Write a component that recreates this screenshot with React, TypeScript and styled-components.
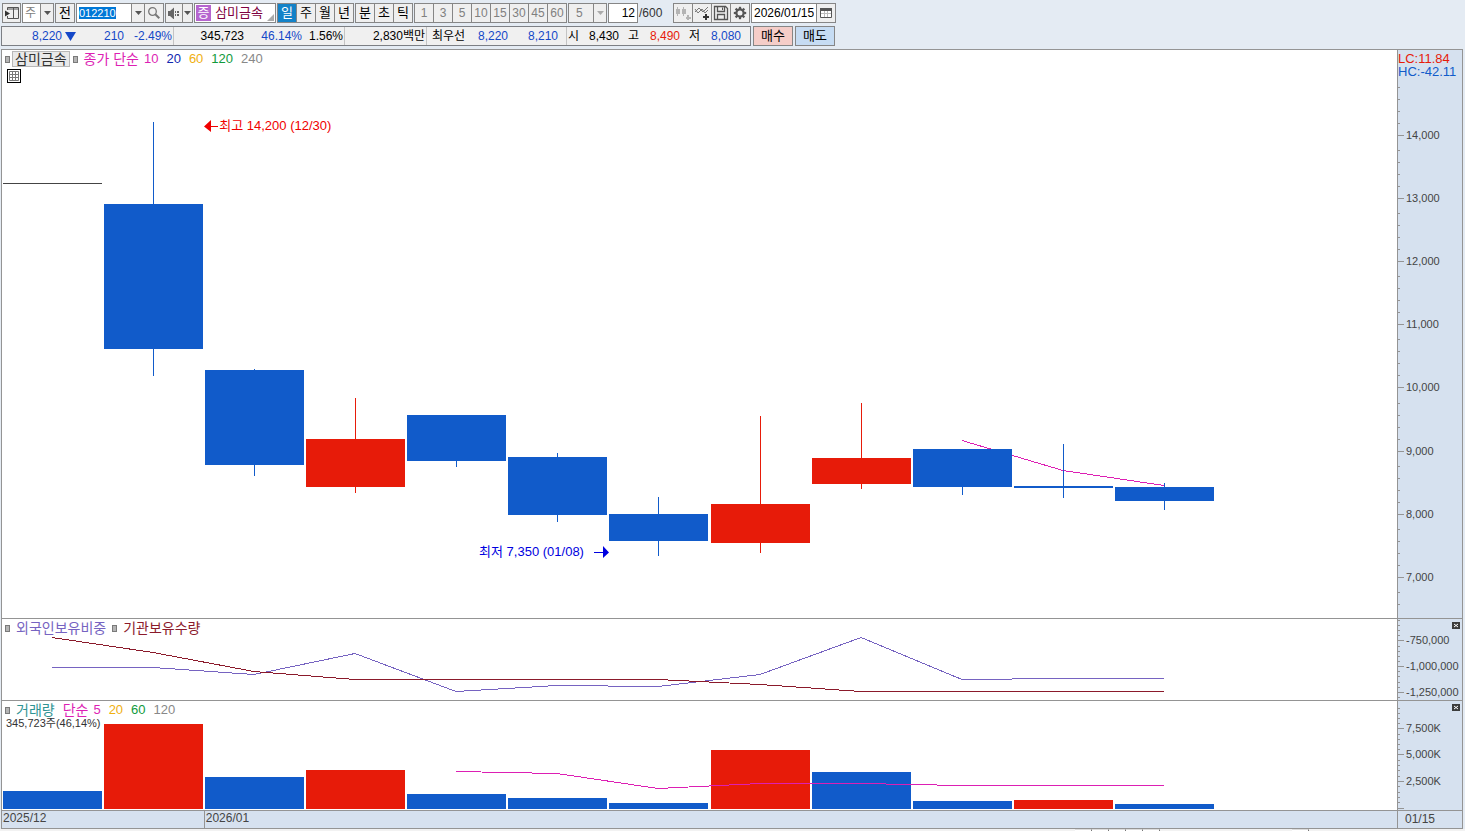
import React, { useEffect, useRef } from 'react';
import styled, { createGlobalStyle } from 'styled-components';

const color = {
  bar: '#e4ebf3',
  line: '#949494',
  edge: '#868686',
  axis: '#d6e1ef',
  up: '#e71b09',
  down: '#115bca',
  quoteBlue: '#1448c8',
  magenta: '#dd1fb4',
  violet: '#7663c1',
  maroon: '#8b1a2b',
  axisText: '#444444',
};

const GlobalStyle = createGlobalStyle`
  *, *::before, *::after { box-sizing: border-box; }
  body {
    margin: 0;
    background: #f2f2f2;
    color: #000;
    font-family: "Liberation Sans", "Noto Sans CJK KR", sans-serif;
    font-size: 12px;
    line-height: 16px;
  }
  button, input, select { font: inherit; color: inherit; margin: 0; border-radius: 0; }
`;

const Page = styled.div`
  background: ${color.bar};
`;

const Header = styled.header`
  display: flex;
  flex-direction: column;
  gap: 3px;
  padding: 3px 0 3px 1px;
`;

const Toolbar = styled.div`
  display: flex;
  align-items: center;
  gap: 1px;
  height: 20px;
  padding-left: 1px;
`;

const Group = styled.div`
  display: flex;
  height: 20px;
  & > * + * { margin-left: -1px; }
`;

const ToolButton = styled.button<{ $w?: number; $active?: boolean; $muted?: boolean }>`
  display: flex;
  align-items: center;
  justify-content: center;
  width: ${p => p.$w ?? 20}px;
  height: 20px;
  padding: 0;
  border: 1px solid ${color.edge};
  background: ${p => (p.$active ? '#1382c8' : '#efefef')};
  color: ${p => (p.$active ? '#fff' : p.$muted ? '#808080' : '#000')};
  line-height: 18px;
`;

const Period = styled(ToolButton)`
  font-size: 13px;
`;

const Picker = styled.label<{ $w: number }>`
  position: relative;
  display: flex;
  width: ${p => p.$w}px;
  height: 20px;
`;

const Select = styled.select<{ $white?: boolean }>`
  appearance: none;
  width: 100%;
  height: 20px;
  padding: 0 13px 0 ${p => (p.$white ? 2 : 7)}px;
  border: 1px solid ${color.edge};
  background: ${p => (p.$white ? '#fff' : '#efefef')};
  color: #808080;
  opacity: 1;
  line-height: 18px;
`;

const PickerArrow = styled.span`
  position: absolute;
  top: 1px;
  right: 1px;
  bottom: 1px;
  display: flex;
  align-items: center;
  justify-content: center;
  width: 13px;
  border-left: 1px solid ${color.edge};
  background: #efefef;
  pointer-events: none;
`;

const Field = styled.input<{ $w: number; $align?: string }>`
  width: ${p => p.$w}px;
  height: 20px;
  padding: 0 2px;
  border: 1px solid ${color.edge};
  background: #fff;
  text-align: ${p => p.$align ?? 'left'};
  outline: none;
  &::selection { background: #0078d7; color: #fff; }
`;

const CodeField = styled(Field)`
  font-size: 11px;
`;

const StockName = styled.button`
  display: flex;
  align-items: center;
  gap: 4px;
  width: 82px;
  height: 20px;
  padding: 0 0 0 1px;
  border: 1px solid ${color.edge};
  background: #fff;
  color: #800040;
  font-size: 13px;
  line-height: 16px;
  white-space: nowrap;
`;

const MarketTag = styled.span`
  width: 16px;
  height: 16px;
  background: #b565cf;
  color: #fff;
  text-align: center;
`;

const Corner = styled.svg`
  align-self: flex-end;
  flex: none;
`;

const Total = styled.span`
  width: 33px;
  color: #333;
`;

const Quotes = styled.div`
  display: flex;
  align-items: center;
  gap: 2px;
  height: 20px;
`;

const QuoteBox = styled.div`
  display: flex;
  height: 20px;
  border: 1px solid #7c7f84;
  background: #f0f0f0;
  line-height: 18px;
  white-space: nowrap;
`;

const Cell = styled.div<{ $end?: number }>`
  display: flex;
  padding-right: ${p => p.$end ?? 1}px;
  border-right: 1px solid #c4c4c4;
  &:last-child { border-right: 0; }
`;

const Quote = styled.span<{ $w: number; $c?: string }>`
  display: flex;
  align-items: center;
  justify-content: flex-end;
  width: ${p => p.$w}px;
  color: ${p => p.$c ?? '#000'};
`;

const TradeButton = styled.button<{ $bg: string }>`
  width: 40px;
  height: 20px;
  padding: 0;
  border: 1px solid ${color.edge};
  background: ${p => p.$bg};
  font-size: 13px;
  line-height: 16px;
`;

const Frame = styled.main`
  margin: 0 2px 0 1px;
  border: 1px solid ${color.line};
  background: #fff;
`;

const Pane = styled.section<{ $h: number }>`
  display: grid;
  grid-template-columns: minmax(0, 1fr) 65px;
  height: ${p => p.$h}px;
  border-bottom: 1px solid ${color.line};
  &:last-child { border-bottom: 0; }
`;

const Plot = styled.div`
  position: relative;
  & > svg { display: block; width: 100%; height: 100%; }
`;

const Axis = styled.div`
  position: relative;
  border-left: 1px solid ${color.line};
  background: ${color.axis};
  & > svg { display: block; }
`;

const AxisText = styled.text`
  font-size: 11px;
  fill: ${color.axisText};
`;

const Overlay = styled.div`
  position: absolute;
  top: 1px;
  left: 3px;
`;

const Legend = styled.div`
  display: flex;
  align-items: center;
  height: 16px;
  font-size: 13px;
  line-height: 16px;
  white-space: nowrap;
`;

const Marker = styled.span<{ $before?: number }>`
  width: 5px;
  height: 7px;
  margin-left: ${p => p.$before ?? 0}px;
  border: 1px solid #7a7a7a;
  background: #b4b4b4;
`;

const LegendItem = styled.span<{ $c: string; $gap?: number }>`
  margin-left: ${p => p.$gap ?? 8}px;
  color: ${p => p.$c};
`;

const LegendName = styled(LegendItem)`
  font-size: 14px;
`;

const NameButton = styled.button`
  height: 16px;
  margin: 0 3px 0 2px;
  padding: 0 2px;
  border: 1px solid #b8b8b8;
  background: #e9e9e9;
  color: #333;
  font-size: 14px;
  line-height: 14px;
`;

const TableButton = styled.button`
  display: block;
  width: 14px;
  height: 14px;
  margin: 2px 0 0 2px;
  padding: 0;
  border: 1px solid #000;
  background: #fff;
  & > svg { display: block; }
`;

const VolumeNote = styled.div`
  margin-left: 1px;
  color: #333;
  font-size: 11px;
  line-height: 10px;
`;

const Note = styled.div<{ $x: string; $y: string; $c: string; $gap: number }>`
  position: absolute;
  left: ${p => p.$x};
  top: ${p => p.$y};
  display: flex;
  align-items: center;
  gap: ${p => p.$gap}px;
  color: ${p => p.$c};
  font-size: 13px;
  line-height: 16px;
  white-space: nowrap;
`;

const Change = styled.div`
  position: absolute;
  top: 2px;
  left: 0;
  font-size: 13px;
  line-height: 13px;
  white-space: nowrap;
`;

const Tint = styled.div<{ $c: string }>`
  color: ${p => p.$c};
`;

const CloseButton = styled.button`
  position: absolute;
  top: 3px;
  right: 2px;
  display: flex;
  width: 8px;
  height: 7px;
  padding: 0;
  border: 0;
  background: #3c3c3c;
`;

const Dates = styled.div`
  display: flex;
  background: ${color.axis};
  color: ${color.axisText};
`;

const Month = styled.span<{ $share: number }>`
  flex: ${p => p.$share} 1 0;
  padding-left: 1px;
  line-height: 15px;
  & + & { border-left: 1px solid ${color.line}; }
`;

const LastDate = styled.span`
  padding-left: 7px;
  border-left: 1px solid ${color.line};
  background: ${color.axis};
  color: ${color.axisText};
`;

const Footer = styled.footer`
  display: flex;
  justify-content: flex-end;
  height: 2px;
  padding-right: 156px;
  background: #f2f2f2;
`;

const FooterTab = styled.span<{ $gap?: number }>`
  width: 17px;
  height: 2px;
  margin-left: ${p => p.$gap ?? 0}px;
  border-top: 1px solid #dcdcdc;
  border-right: 1px solid #777;
  background: #fff;
`;

const Down = ({ fill = '#555' }: { fill?: string }) => (
  <svg width="7" height="4" viewBox="0 0 7 4"><path d="M0 0h7L3.5 4z" fill={fill} /></svg>
);

const PanelIcon = () => (
  <svg width="16" height="14" viewBox="0 0 16 14">
    <path d="M3.500 4V1.500H14.500V12.500H3.500V10M9.500 1.500V12.500M3 3H15" fill="none" stroke="#555" />
    <path d="M1 4.500L6 7.500L1 10.500z" fill="#333" />
  </svg>
);

const SearchIcon = () => (
  <svg width="14" height="14" viewBox="0 0 14 14" fill="none" stroke="#777">
    <circle cx="5.500" cy="5.500" r="3.800" strokeWidth="1.300" />
    <path d="M8.300 8.300L12.300 12.300" strokeWidth="2" />
  </svg>
);

const SpeakerIcon = () => (
  <svg width="14" height="12" viewBox="0 0 14 12" fill="#666">
    <path d="M1 4h2v5H1zM3 4L7 0.500v12L3 9z" />
    <path d="M8 4h1v2H8zM8 7h1v2H8zM10 4h2v2h-2zM10 7h2v2h-2z" />
  </svg>
);

const CandlesIcon = () => (
  <svg width="16" height="16" viewBox="0 0 16 16" fill="#b4b4b4" shapeRendering="crispEdges">
    <path d="M1 4h4v5H1zM2 2h1v9H2zM7 4h4v5H7zM8 2h1v9H8zM11 12h5v2h-5zM12 10h2v5h-2z" />
  </svg>
);

const WaveIcon = () => (
  <svg width="16" height="16" viewBox="0 0 16 16">
    <path d="M1 7L5 3L9 7L14 2M1 4L4 8L8 4L11 8L14 5" fill="none" stroke="#777" />
    <path d="M9 11h6v2H9zM11 9h2v6h-2z" fill="#333" />
  </svg>
);

const SaveIcon = () => (
  <svg width="16" height="16" viewBox="0 0 16 16" fill="none" stroke="#555">
    <path d="M1.500 1.500H12.500L14.500 3.500V14.500H1.500zM4.500 1.500V6.500H11.500V1.500M4.500 14.500V9.500H11.500V14.500" strokeWidth="1.300" />
    <path d="M9.500 2.500V5" />
  </svg>
);

const GearIcon = () => (
  <svg width="14" height="14" viewBox="-7 -7 14 14">
    <circle r="3.600" fill="none" stroke="#555" strokeWidth="2.200" />
    {[0, 45, 90, 135, 180, 225, 270, 315].map(a => (
      <rect key={a} x="-1.100" y="-6.200" width="2.200" height="2.400" fill="#555" transform={`rotate(${a})`} />
    ))}
  </svg>
);

const CalendarIcon = () => (
  <svg width="12" height="12" viewBox="0 0 12 12">
    <path d="M.5 2.500H11.500V10.500H.5z" fill="#fff" stroke="#555" />
    <path d="M1 6.500H11M4.500 3V10M7.500 3V10" fill="none" stroke="#bbb" />
    <path d="M0 1h12v3H0z" fill="#555" />
  </svg>
);

const PITCH = 101.1;
const center = (i: number) => Math.round(51.85 + i * PITCH);
const left = (i: number) => center(i) - 49;

/* open/close edges and high/low of each session, in plot units */
const candles = [
  { top: 204, bottom: 349, high: 122, low: 376 },
  { top: 370, bottom: 465, high: 369, low: 476 },
  { top: 439, bottom: 487, high: 398, low: 493, up: true },
  { top: 415, bottom: 461, high: 415, low: 467 },
  { top: 457, bottom: 515, high: 453, low: 522 },
  { top: 514, bottom: 541, high: 497, low: 556 },
  { top: 504, bottom: 543, high: 416, low: 553, up: true },
  { top: 458, bottom: 484, high: 403, low: 489, up: true },
  { top: 449, bottom: 487, high: 449, low: 495 },
  { top: 486, bottom: 488, high: 444, low: 498 },
  { top: 487, bottom: 501, high: 483, low: 510 },
];

const volumes = [791, 724, 777, 770, 794, 798, 803, 750, 772, 801, 800, 804];
const risingVolume = [1, 3, 7, 10];
const foreign = [667, 667, 674, 653, 691, 685, 686, 674, 637, 679, 678, 678];
const institution = [637, 652, 671, 679, 679, 679, 679, 684, 691, 691, 691, 691];
const volumeAverage = [771, 773, 788, 783, 783, 785, 785, 785];
const closeAverage = [440, 470, 485];

const points = (values: number[], from = 0) =>
  values.map((v, i) => `${center(i + from)},${v + 0.5}`).join(' ');

const Series = ({ values, from, stroke }: { values: number[]; from?: number; stroke: string }) => (
  <polyline points={points(values, from)} fill="none" stroke={stroke} vectorEffect="non-scaling-stroke" />
);

type Tick = [number, string];

const Scale = ({ top, height, major, minor }: { top: number; height: number; major: Tick[]; minor: number[] }) => (
  <svg width="64" height={height} viewBox={`0 ${top} 64 ${height}`} shapeRendering="crispEdges">
    {minor.map(y => <rect key={y} x="0" y={y} width="2" height="1" fill={color.line} />)}
    {major.map(([y, label]) => (
      <g key={y}>
        <rect x="0" y={y} width="6" height="1" fill={color.line} />
        <AxisText x="8" y={y + 4}>{label}</AxisText>
      </g>
    ))}
  </svg>
);

const priceTicks: Tick[] = [
  [135, '14,000'], [198, '13,000'], [261, '12,000'], [324, '11,000'],
  [387, '10,000'], [451, '9,000'], [514, '8,000'], [577, '7,000'],
];
const priceMinor = [...priceTicks.flatMap(([y]) => [y - 48, y - 36, y - 24, y - 12]), 592, 604];

const Close = () => (
  <CloseButton aria-label="닫기">
    <svg width="8" height="7" viewBox="0 0 8 7"><path d="M2 2L6 5M6 2L2 5" stroke="#fff" /></svg>
  </CloseButton>
);

export default function App() {
  const code = useRef<HTMLInputElement>(null);
  useEffect(() => {
    code.current?.focus();
    code.current?.select();
  }, []);

  return (
    <Page>
      <GlobalStyle />
      <Header>
        <Toolbar>
          <Group><ToolButton $w={19} aria-label="패널"><PanelIcon /></ToolButton></Group>
          <Group>
            <Picker $w={32}>
              <Select $white aria-label="구분"><option>주</option></Select>
              <PickerArrow><Down /></PickerArrow>
            </Picker>
          </Group>
          <Group><Period>전</Period></Group>
          <Group>
            <CodeField ref={code} $w={56} defaultValue="012210" aria-label="종목코드" />
            <ToolButton $w={14} aria-label="종목 목록"><Down /></ToolButton>
            <ToolButton aria-label="검색"><SearchIcon /></ToolButton>
          </Group>
          <Group>
            <ToolButton $w={18} aria-label="소리"><SpeakerIcon /></ToolButton>
            <ToolButton $w={11} aria-label="소리 설정"><Down /></ToolButton>
          </Group>
          <StockName>
            <MarketTag>증</MarketTag>
            삼미금속
            <Corner width="8" height="8" viewBox="0 0 8 8"><path d="M7 0V7H0z" fill="#aaa" /></Corner>
          </StockName>
          <Group>
            <Period $active>일</Period>
            <Period>주</Period>
            <Period>월</Period>
            <Period>년</Period>
          </Group>
          <Group>
            <Period>분</Period>
            <Period>초</Period>
            <Period>틱</Period>
          </Group>
          <Group>
            {['1', '3', '5', '10', '15', '30', '45', '60'].map(n => <ToolButton key={n} $muted>{n}</ToolButton>)}
          </Group>
          <Group>
            <Picker $w={39}>
              <Select aria-label="분 단위" disabled><option>5</option></Select>
              <PickerArrow><Down fill="#aaa" /></PickerArrow>
            </Picker>
          </Group>
          <Field $w={30} $align="right" defaultValue="12" aria-label="표시 개수" />
          <Total>/600</Total>
          <Group>
            <ToolButton aria-label="비교 차트"><CandlesIcon /></ToolButton>
            <ToolButton aria-label="지표 추가"><WaveIcon /></ToolButton>
            <ToolButton aria-label="저장"><SaveIcon /></ToolButton>
            <ToolButton aria-label="설정"><GearIcon /></ToolButton>
          </Group>
          <Group>
            <Field $w={66} defaultValue="2026/01/15" aria-label="날짜" />
            <ToolButton aria-label="달력"><CalendarIcon /></ToolButton>
          </Group>
        </Toolbar>
        <Quotes>
          <QuoteBox>
            <Cell>
              <Quote $w={60} $c={color.quoteBlue}>8,220</Quote>
              <Quote $w={14} $c={color.quoteBlue}>
                <svg width="11" height="9" viewBox="0 0 11 9"><path d="M0 0H11L5.500 9z" fill={color.quoteBlue} /></svg>
              </Quote>
              <Quote $w={48} $c={color.quoteBlue}>210</Quote>
              <Quote $w={48} $c={color.quoteBlue}>-2.49%</Quote>
            </Cell>
            <Cell>
              <Quote $w={70}>345,723</Quote>
              <Quote $w={58} $c={color.quoteBlue}>46.14%</Quote>
              <Quote $w={41}>1.56%</Quote>
            </Cell>
            <Cell><Quote $w={80}>2,830백만</Quote></Cell>
            <Cell $end={8}>
              <Quote $w={38}>최우선</Quote>
              <Quote $w={43} $c={color.quoteBlue}>8,220</Quote>
              <Quote $w={50} $c={color.quoteBlue}>8,210</Quote>
            </Cell>
            <Cell $end={9}>
              <Quote $w={12}>시</Quote>
              <Quote $w={40}>8,430</Quote>
              <Quote $w={20}>고</Quote>
              <Quote $w={41} $c={color.up}>8,490</Quote>
              <Quote $w={20}>저</Quote>
              <Quote $w={41} $c={color.quoteBlue}>8,080</Quote>
            </Cell>
          </QuoteBox>
          <TradeButton $bg="#f5cdc8">매수</TradeButton>
          <TradeButton $bg="#c6dcf3">매도</TradeButton>
        </Quotes>
      </Header>

      <Frame>
        <Pane $h={569}>
          <Plot>
            <svg viewBox="2 50 1395 568" preserveAspectRatio="none">
              <g shapeRendering="crispEdges">
                <Series values={closeAverage} from={9} stroke={color.magenta} />
                <rect x={left(0)} y="183" width="99" height="1" fill="#444" />
                {candles.map((c, i) => (
                  <g key={i} fill={c.up ? color.up : color.down}>
                    <rect x={left(i + 1)} y={c.top} width="99" height={c.bottom - c.top} />
                    <rect x={center(i + 1)} y={c.high} width="1" height={c.low - c.high} />
                  </g>
                ))}
              </g>
            </svg>
            <Overlay>
              <Legend>
                <Marker />
                <NameButton>삼미금속</NameButton>
                <Marker />
                <LegendName $c={color.magenta} $gap={6}>종가 단순</LegendName>
                <LegendItem $c={color.magenta} $gap={5}>10</LegendItem>
                <LegendItem $c="#1028b0">20</LegendItem>
                <LegendItem $c="#f0b010">60</LegendItem>
                <LegendItem $c="#109a3c">120</LegendItem>
                <LegendItem $c="#888">240</LegendItem>
              </Legend>
              <TableButton aria-label="표 보기">
                <svg width="12" height="12" viewBox="0 0 12 12">
                  <path d="M1.500 1.500H10.500V10.500H1.500zM1 4.500H11M1 7.500H11M4.500 2V10M7.500 2V10" fill="none" stroke="#777" />
                </svg>
              </TableButton>
            </Overlay>
            <Note $x="14.5%" $y="12%" $c="#f00000" $gap={1}>
              <svg width="14" height="12" viewBox="0 0 14 12"><path d="M0 6.500L7 0V6H14V7H7V12z" fill="#f00000" /></svg>
              최고 14,200 (12/30)
            </Note>
            <Note $x="34.2%" $y="87%" $c="#0000e0" $gap={10}>
              최저 7,350 (01/08)
              <svg width="15" height="12" viewBox="0 0 15 12"><path d="M15 6.500L9 0V6H0V7H9V12z" fill="#0000e0" /></svg>
            </Note>
          </Plot>
          <Axis>
            <Scale top={50} height={568} major={priceTicks} minor={priceMinor} />
            <Change>
              <Tint $c={color.up}>LC:11.84</Tint>
              <Tint $c={color.down}>HC:-42.11</Tint>
            </Change>
          </Axis>
        </Pane>

        <Pane $h={82}>
          <Plot>
            <svg viewBox="2 619 1395 81" preserveAspectRatio="none" shapeRendering="crispEdges">
              <Series values={foreign} stroke={color.violet} />
              <Series values={institution} stroke={color.maroon} />
            </svg>
            <Overlay>
              <Legend>
                <Marker />
                <LegendName $c={color.violet} $gap={6}>외국인보유비중</LegendName>
                <Marker $before={6} />
                <LegendName $c={color.maroon} $gap={6}>기관보유수량</LegendName>
              </Legend>
            </Overlay>
          </Plot>
          <Axis>
            <Scale
              top={619}
              height={81}
              major={[[640, '-750,000'], [666, '-1,000,000'], [692, '-1,250,000']]}
              minor={[620, 625, 630, 635, 646, 651, 656, 661, 671, 676, 682, 687, 697]}
            />
            <Close />
          </Axis>
        </Pane>

        <Pane $h={110}>
          <Plot>
            <svg viewBox="2 701 1395 109" preserveAspectRatio="none" shapeRendering="crispEdges">
              {volumes.map((y, i) => (
                <rect key={i} x={left(i)} y={y} width="99" height={809 - y} fill={risingVolume.includes(i) ? color.up : color.down} />
              ))}
              <Series values={volumeAverage} from={4} stroke={color.magenta} />
            </svg>
            <Overlay>
              <Legend>
                <Marker />
                <LegendName $c="#2f9494" $gap={6}>거래량</LegendName>
                <LegendName $c={color.magenta}>단순</LegendName>
                <LegendItem $c={color.magenta} $gap={5}>5</LegendItem>
                <LegendItem $c="#f0b010">20</LegendItem>
                <LegendItem $c="#109a3c">60</LegendItem>
                <LegendItem $c="#888">120</LegendItem>
              </Legend>
              <VolumeNote>345,723주(46,14%)</VolumeNote>
            </Overlay>
          </Plot>
          <Axis>
            <Scale
              top={701}
              height={109}
              major={[[728, '7,500K'], [754, '5,000K'], [781, '2,500K'], [808, '']]}
              minor={[708, 713, 718, 723, 734, 739, 744, 749, 760, 765, 770, 776, 786, 792, 797, 802]}
            />
            <Close />
          </Axis>
        </Pane>

        <Pane $h={17}>
          <Dates>
            <Month $share={201}>2025/12</Month>
            <Month $share={1193}>2026/01</Month>
          </Dates>
          <LastDate>01/15</LastDate>
        </Pane>
      </Frame>

      <Footer>
        {[1, 2, 3, 4, 5].map(n => <FooterTab key={n} />)}
        <FooterTab $gap={132} />
      </Footer>
    </Page>
  );
}
